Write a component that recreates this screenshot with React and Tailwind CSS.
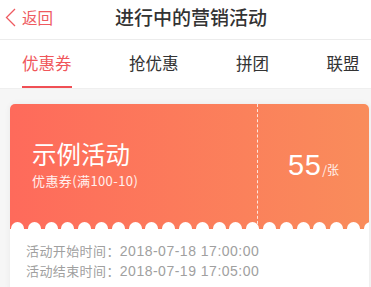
import React from 'react';

const TABS = ['优惠券', '抢优惠', '拼团', '联盟'];

const FONT = { fontFamily: '"Noto Sans CJK SC", "Liberation Sans", sans-serif' };
const NUM_FONT = { fontFamily: '"Liberation Sans", "Noto Sans CJK SC", sans-serif' };

const Scallops = () => (
  <div className="absolute left-0 right-0 bottom-0 h-[7px] overflow-hidden flex gap-[3.8px] pl-[1px]">
    {Array.from({ length: 24 }).map((_, i) => (
      <div key={i} className="w-[13px] h-[13px] shrink-0 rounded-full bg-white" />
    ))}
  </div>
);

const App = () => {
  const active = 0;

  return (
    <div className="w-[371px] h-[287px] overflow-hidden bg-[#f6f6f6]" style={FONT}>
      {/* header */}
      <div className="h-[40px] bg-white border-b border-[#ececec] flex items-center pb-[5px]">
        <div className="flex items-center pl-[5px] text-[#ee5a60]">
          <svg width="11" height="19" viewBox="0 0 11 19" fill="none">
            <polyline points="10,1 1.5,9.5 10,18" stroke="#ee5a60" strokeWidth="1.3" />
          </svg>
          <span className="ml-[6px] text-[15.5px] leading-[20px]">返回</span>
        </div>
        <h1 className="ml-[62px] text-[19px] leading-[24px] font-medium text-[#333]">进行中的营销活动</h1>
      </div>

      {/* tabs */}
      <div className="h-[49px] bg-white border-b border-[#efefef] flex pl-[22px] gap-[57.5px]">
        {TABS.map((t, i) => (
          <div key={t} className="h-full flex flex-col justify-between">
            <span className={`pt-[12px] text-[16.5px] leading-[22px] ${i === active ? 'text-[#f0565a]' : 'text-[#333]'}`}>{t}</span>
            <div className={`h-[2px] ${i === active ? 'bg-[#f04f55]' : 'bg-transparent'}`} />
          </div>
        ))}
      </div>

      {/* card */}
      <div className="pt-[15px] pl-[10px] pr-[2px]">
        <div className="bg-white rounded-[5px] shadow-[0_0_6px_rgba(0,0,0,0.06)] overflow-hidden">
          <div className="relative h-[125px] flex bg-gradient-to-r from-[#fe6a5b] to-[#f98c5b] text-white">
            <div className="w-[247px] flex flex-col justify-center pl-[22px] pb-[4px]">
              <div className="text-[24.5px] leading-[28px]">示例活动</div>
              <div className="text-[13px] leading-[16px] tracking-[0.4px] text-white/90 mt-[5px]">优惠券(满100-10)</div>
            </div>
            <div className="border-l border-dashed border-white/80" />
            <div className="flex-1 flex items-baseline justify-center pt-[44px]">
              <span className="text-[29px] leading-[34px] tracking-[0.5px]" style={NUM_FONT}>55</span>
              <span className="text-[12px] ml-[1px] text-white/90">/张</span>
            </div>
            <Scallops />
          </div>
          <div className="pt-[12px] pb-[12px] pl-[16px] text-[#a0a0a0]">
            <div className="leading-[20px] flex items-center">
              <span className="text-[13px] tracking-[0.4px]">活动开始时间：</span>
              <span className="text-[14px] tracking-[0.5px]" style={NUM_FONT}>2018-07-18 17:00:00</span>
            </div>
            <div className="leading-[20px] flex items-center">
              <span className="text-[13px] tracking-[0.4px]">活动结束时间：</span>
              <span className="text-[14px] tracking-[0.5px]" style={NUM_FONT}>2018-07-19 17:05:00</span>
            </div>
          </div>
        </div>
      </div>
    </div>
  );
};

export default App;
